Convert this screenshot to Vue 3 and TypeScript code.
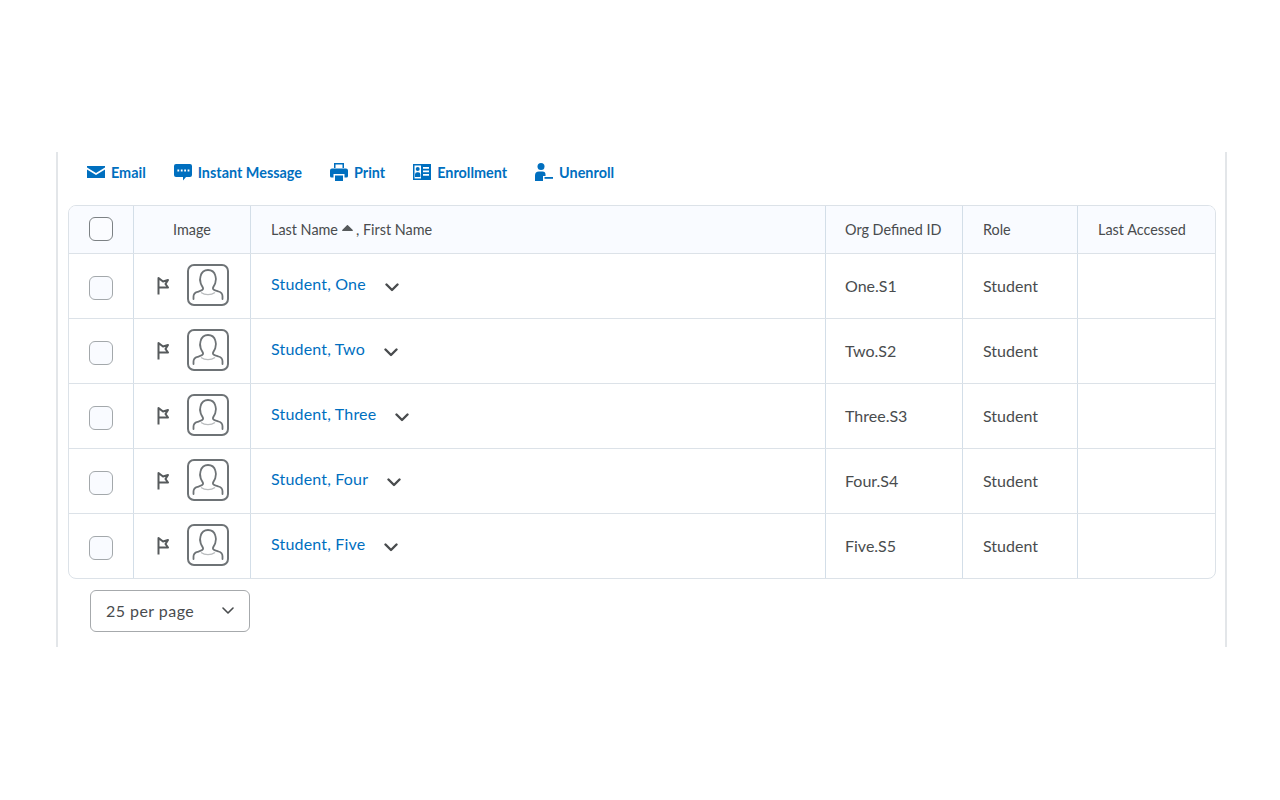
<script setup lang="ts">
interface Student {
  name: string
  orgId: string
}

const students: Student[] = [
  { name: 'Student, One', orgId: 'One.S1' },
  { name: 'Student, Two', orgId: 'Two.S2' },
  { name: 'Student, Three', orgId: 'Three.S3' },
  { name: 'Student, Four', orgId: 'Four.S4' },
  { name: 'Student, Five', orgId: 'Five.S5' },
]
</script>

<template>
  <div class="page">
    <div class="panel">
      <div class="toolbar">
        <a class="tool">
          <svg width="18" height="12" viewBox="0 0 18 12"><path d="M0 0h18v1.600L9 7 0 1.600zM0 3.600l9 5.400 9-5.400V12H0z" fill="#006fbf" /></svg>
          Email
        </a>
        <a class="tool">
          <svg width="18" height="17" viewBox="0 0 18 17"><path fill-rule="evenodd" d="M2 0h14a2 2 0 0 1 2 2v9a2 2 0 0 1-2 2h-4l-3 3.500V13H2a2 2 0 0 1-2-2V2a2 2 0 0 1 2-2zM3.400 5.600v1.800h1.800V5.600zm3.400 0v1.800h1.800V5.600zm3.400 0v1.800H12V5.600zm3.400 0v1.800h1.800V5.600z" fill="#006fbf" /></svg>
          Instant Message
        </a>
        <a class="tool">
          <svg width="18" height="18" viewBox="0 0 18 18"><path fill-rule="evenodd" d="M4 0h10v5H12.500V1.500h-7V5H4zM2 5.500h14a2 2 0 0 1 2 2V13a1.500 1.500 0 0 1-1.500 1.500H14.500V11h-11v3.500H1.500A1.500 1.500 0 0 1 0 13V7.500a2 2 0 0 1 2-2zM5 12.500h8V18H5z" fill="#006fbf" /></svg>
          Print
        </a>
        <a class="tool">
          <svg width="18" height="16" viewBox="0 0 18 16"><path fill-rule="evenodd" d="M0 0h18v16H0zM1.500 1.500v13h6.500v-13zM10 3v1.800h6V3zm0 3.500v1.800h6V6.500zm0 3.500v1.800h6V10z" fill="#006fbf" /><circle cx="4.700" cy="5" r="2" fill="#006fbf" /><path d="M2 13v-2.500a2.200 2.200 0 0 1 2.200-2.200h1a2.200 2.200 0 0 1 2.200 2.200V13z" fill="#006fbf" /></svg>
          Enrollment
        </a>
        <a class="tool">
          <svg width="18" height="18" viewBox="0 0 18 18"><circle cx="6" cy="3.500" r="3.500" fill="#006fbf" /><path d="M0 18v-5.500A4 4 0 0 1 4 8.500h3.500a3 3 0 0 1 3 3V13H8v5z" fill="#006fbf" /><rect x="9.500" y="14" width="8.500" height="1.800" fill="#006fbf" /></svg>
          Unenroll
        </a>
      </div>

      <div class="table">
        <div class="row head">
          <div class="cell check-col"><span class="check blank"></span></div>
          <div class="cell image-col centered">Image</div>
          <div class="cell name-col">
            <span>Last Name</span>
            <svg class="sort" width="11" height="6" viewBox="0 0 11 6"><path d="M4.700.4a1 1 0 0 1 1.500 0L10.800 5a.6.6 0 0 1-.4 1H.6a.6.6 0 0 1-.4-1z" fill="#565a5c" /></svg>
            <span>, First Name</span>
          </div>
          <div class="cell id-col">Org Defined ID</div>
          <div class="cell role-col">Role</div>
          <div class="cell last-col">Last Accessed</div>
        </div>
        <div v-for="student in students" :key="student.orgId" class="row">
          <div class="cell check-col"><span class="check"></span></div>
          <div class="cell image-col">
            <svg class="flag" width="12" height="18" viewBox="0 0 12 18">
              <path d="M1.500 17.500V1L6 4.500l5-1.500L8.500 7 11 10.500H2" fill="none" stroke="#565a5c" stroke-width="2" stroke-linejoin="round" />
            </svg>
            <svg class="avatar" width="42" height="42" viewBox="0 0 42 42">
              <rect x="1" y="1" width="40" height="40" rx="6" fill="#fff" stroke="#6e7376" stroke-width="2" />
              <path d="M6.500 35v-2.500c0-2.700 1.600-4 4-4.700 2.800-.8 5.600-1.300 5.600-3.300 0-1.200-1.600-2.800-2.400-5.200-.8-2.400-.9-5-.1-7.300C14.600 8.300 17.500 6 21 6s6.400 2.300 7.400 5.700c.8 2.300.7 4.900-.1 7.300-.8 2.400-2.400 4-2.400 5.200 0 2 2.800 2.500 5.600 3.300 2.400.7 4 2 4 4.700V35" fill="none" stroke="#6e7376" stroke-width="1.800" stroke-linecap="round" />
              <path d="M14 28.500c2 1.500 4.500 2.200 7 2.200s5-.7 7-2.200" fill="none" stroke="#b9bcbe" stroke-width="1.300" />
            </svg>
          </div>
          <div class="cell name-col name-cell">
            <a class="student-link">{{ student.name }}</a>
            <svg class="chevron" width="14" height="9" viewBox="0 0 14 9"><path d="M1.500 1.500L7 7l5.500-5.500" fill="none" stroke="#494c4e" stroke-width="2.400" stroke-linecap="round" stroke-linejoin="round" /></svg>
          </div>
          <div class="cell id-col body-text">{{ student.orgId }}</div>
          <div class="cell role-col body-text">Student</div>
          <div class="cell last-col"></div>
        </div>
      </div>

      <div class="pager">
        <div class="per-page">
          <span>25 per page</span>
          <svg width="12" height="7" viewBox="0 0 12 7"><path d="M1 1l5 5 5-5" fill="none" stroke="#494c4e" stroke-width="1.600" stroke-linecap="round" stroke-linejoin="round" /></svg>
        </div>
      </div>
    </div>
  </div>
</template>

<style>
body {
  background: #fff;
}
</style>

<style scoped>
.page {
  width: 1280px;
  height: 800px;
  padding: 152px 53px 0 56px;
  box-sizing: border-box;
  font-family: Lato, sans-serif;
  color: #494c4e;
}

.panel {
  height: 495px;
  box-sizing: border-box;
  padding: 0 9px 0 10px;
  border-left: 2px solid #e3e6e9;
  border-right: 2px solid #e3e6e9;
}

.toolbar {
  display: flex;
  height: 53px;
  padding-left: 19px;
  padding-top: 10px;
  box-sizing: border-box;
  gap: 28px;
  align-items: flex-start;
}

.tool {
  display: flex;
  align-items: center;
  gap: 6px;
  height: 20px;
  font-size: 14.4px;
  font-weight: 700;
  color: #006fbf;
}

.table {
  width: 1148px;
  border: 1px solid #dce2e8;
  border-radius: 8px;
  box-sizing: border-box;
  overflow: hidden;
}

.row {
  display: flex;
  height: 65px;
  border-top: 1px solid #dce2e8;
  box-sizing: border-box;
}

.row.head {
  height: 47px;
  border-top: none;
  background: #f9fbff;
  font-size: 14.4px;
}

.row.head .cell {
  padding-bottom: 1px;
}

.cell {
  display: flex;
  align-items: center;
  box-sizing: border-box;
  border-left: 1px solid #d3dee8;
  padding-left: 20px;
}

.check-col {
  width: 64px;
  border-left: none;
  padding-left: 19.5px;
}

.image-col {
  width: 117px;
  padding-left: 23px;
}

.row.head .centered {
  justify-content: center;
  padding-left: 0;
}

.name-col {
  width: 575px;
}

.id-col {
  width: 137px;
  padding-left: 19px;
}

.role-col {
  width: 115px;
}

.last-col {
  flex: 1;
}

.check {
  width: 24px;
  height: 24px;
  margin-top: 3px;
  box-sizing: border-box;
  border: 1px solid #a3a8ab;
  border-radius: 6px;
  background: #f9fbff;
}

.check.blank {
  margin-top: 0;
  background: #fbfcff;
  border-color: #7c8184;
}

.flag {
  margin-top: -1px;
}

.avatar {
  margin-left: 18px;
  margin-top: -2px;
}

.sort {
  margin: 0 3px 3px 4px;
}

.name-cell {
  padding-bottom: 5px;
}

.student-link {
  font-size: 16px;
  color: #006fbf;
  letter-spacing: 0.18px;
}

.chevron {
  margin-left: 19px;
  margin-top: 7px;
}

.body-text {
  font-size: 16px;
  padding-bottom: 2px;
}

.pager {
  padding: 11px 0 0 22px;
}

.per-page {
  display: flex;
  align-items: center;
  justify-content: space-between;
  width: 160px;
  height: 41.500px;
  box-sizing: border-box;
  padding: 0 15px 1px 15px;
  border: 1.500px solid #a6a9ac;
  border-radius: 6px;
  font-size: 16px;
  letter-spacing: 0.45px;
  color: #494c4e;
}
</style>
